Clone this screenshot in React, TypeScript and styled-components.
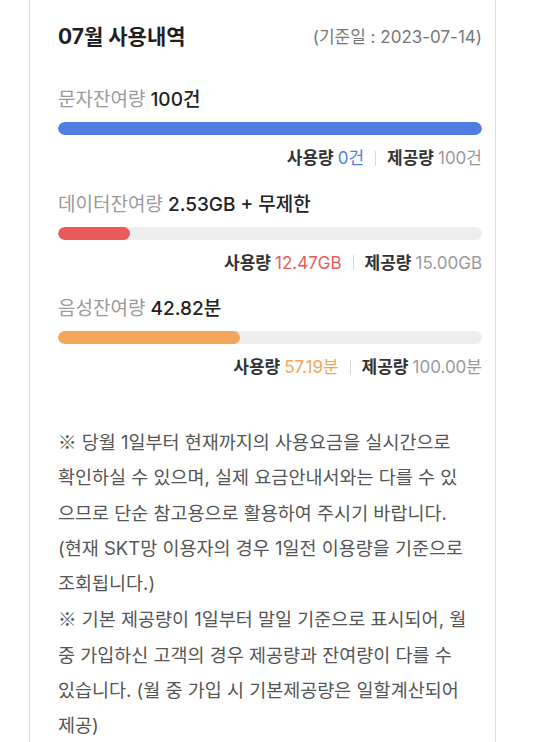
import React from "react";
import styled, { createGlobalStyle } from "styled-components";

const Global = createGlobalStyle`
  html, body { margin: 0; padding: 0; background: #fff; }
  body { font-family: "Inter", "Noto Sans CJK KR", "Noto Sans", sans-serif; color: #222; }
`;

const Card = styled.div`
  margin-left: 29px;
  width: 467px;
  min-height: 742px;
  border-left: 1px solid #dcdcdc;
  border-right: 1px solid #dcdcdc;
  padding: 16px 13px 0 28px;
  box-sizing: border-box;
`;

const Header = styled.div`
  display: flex;
  justify-content: space-between;
  align-items: center;
  height: 38px;
  margin-bottom: 33px;
`;

const Title = styled.h2`
  margin: 0;
  font-size: 21px;
  font-weight: 700;
  color: #1f1f1f;
`;

const DateText = styled.span`
  font-size: 17px;
  color: #777;
`;

const Section = styled.div`
  display: flex;
  flex-direction: column;
  margin-bottom: 22.5px;
`;

const Label = styled.div`
  font-size: 19px;
  line-height: 26px;
  font-weight: 500;
  color: #222;
`;

const LabelMuted = styled.span`
  color: #9a9a9a;
  font-weight: 400;
`;

const Track = styled.div`
  margin-top: 9px;
  height: 13px;
  border-radius: 7px;
  background: #eeeeee;
  overflow: hidden;
`;

const Fill = styled.div<{ $color: string }>`
  height: 100%;
  border-radius: 7px;
  background: ${(p) => p.$color};
`;

const Stats = styled.div`
  display: flex;
  justify-content: flex-end;
  align-items: center;
  margin-top: 12px;
  font-size: 17px;
  line-height: 22px;
`;

const StatKey = styled.span`
  font-weight: 700;
  color: #333;
  margin-right: 4px;
`;

const StatVal = styled.span<{ $color: string }>`
  color: ${(p) => p.$color};
`;

const Divider = styled.span`
  display: inline-block;
  width: 1px;
  height: 15px;
  background: #d8d8d8;
  margin: 0 11px;
`;

const Notes = styled.div`
  margin-top: 46px;
  padding-right: 13px;
  font-size: 18.5px;
  line-height: 35.3px;
  color: #555;
`;

const NoteP = styled.p`
  margin: 0;
`;

const Mark = styled.span`
  font-family: "Noto Sans CJK KR", sans-serif;
`;

type Item = {
  label: string;
  value: string;
  pct: number;
  color: string;
  used: string;
  total: string;
};

const items: Item[] = [
  { label: "문자잔여량", value: "100건", pct: 100, color: "#4f7ee0", used: "0건", total: "100건" },
  { label: "데이터잔여량", value: "2.53GB + 무제한", pct: 16.9, color: "#ec5b5b", used: "12.47GB", total: "15.00GB" },
  { label: "음성잔여량", value: "42.82분", pct: 42.9, color: "#f2a65a", used: "57.19분", total: "100.00분" },
];

export default function App() {
  return (
    <>
      <Global />
      <Card>
        <Header>
          <Title>07월 사용내역</Title>
          <DateText>(기준일 : 2023-07-14)</DateText>
        </Header>
        {items.map((it) => (
          <Section key={it.label}>
            <Label>
              <LabelMuted>{it.label}</LabelMuted> {it.value}
            </Label>
            <Track>
              <Fill $color={it.color} style={{ width: `${it.pct}%` }} />
            </Track>
            <Stats>
              <StatKey>사용량</StatKey>
              <StatVal $color={it.color}>{it.used}</StatVal>
              <Divider />
              <StatKey>제공량</StatKey>
              <StatVal $color="#999">{it.total}</StatVal>
            </Stats>
          </Section>
        ))}
        <Notes>
          <NoteP>
            <Mark>※</Mark> 당월 1일부터 현재까지의 사용요금을 실시간으로 확인하실 수 있으며, 실제 요금안내서와는 다를 수 있으므로 단순 참고용으로 활용하여 주시기 바랍니다.
          </NoteP>
          <NoteP>(현재 SKT망 이용자의 경우 1일전 이용량을 기준으로 조회됩니다.)</NoteP>
          <NoteP>
            <Mark>※</Mark> 기본 제공량이 1일부터 말일 기준으로 표시되어, 월 중 가입하신 고객의 경우 제공량과 잔여량이 다를 수 있습니다. (월 중 가입 시 기본제공량은 일할계산되어 제공)
          </NoteP>
        </Notes>
      </Card>
    </>
  );
}
